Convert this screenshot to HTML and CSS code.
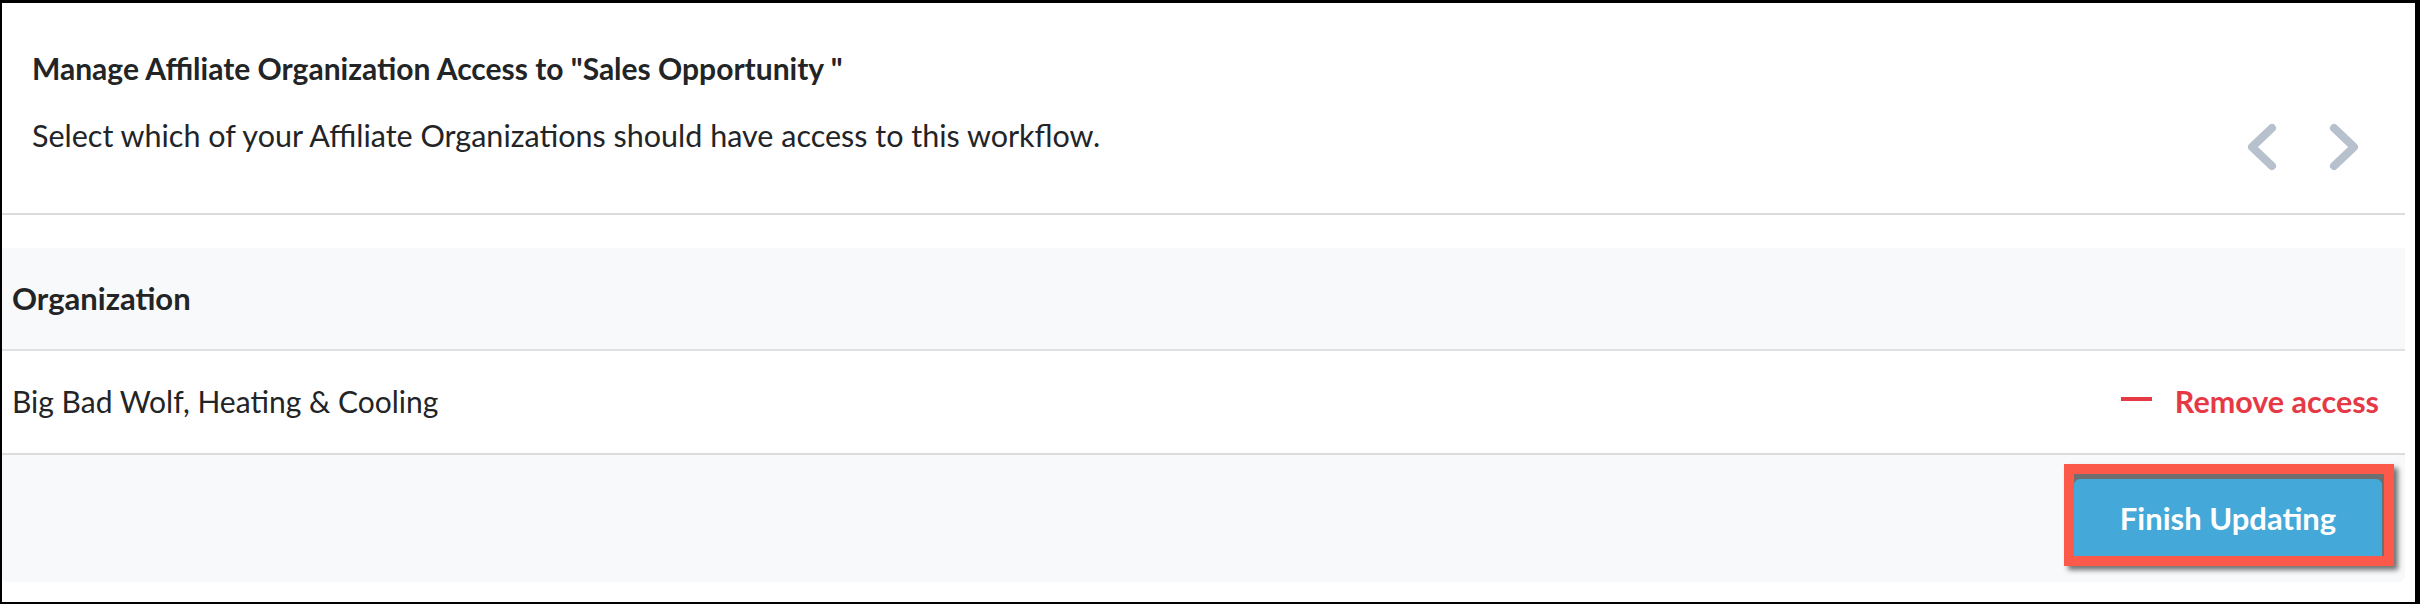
FILE: index.html
```html
<!DOCTYPE html>
<html lang="en">
<head>
<meta charset="utf-8">
<title>Manage Affiliate Organization Access</title>
<link rel="stylesheet" href="styles.css">
</head>
<body>
<div class="frame">
  <div class="card">
    <div class="card-head">
      <div class="head-text">
        <h1 class="title">Manage Affiliate Organization Access to "Sales Opportunity "</h1>
        <p class="subtitle">Select which of your Affiliate Organizations should have access to this workflow.</p>
      </div>
      <div class="pager">
        <svg class="chev" width="30" height="48" viewBox="0 0 30 48"><polyline points="25,5 5,24 25,43" fill="none" stroke="#b6c1cd" stroke-width="8" stroke-linecap="round" stroke-linejoin="round"/></svg>
        <svg class="chev" width="30" height="48" viewBox="0 0 30 48"><polyline points="5,5 25,24 5,43" fill="none" stroke="#b6c1cd" stroke-width="8" stroke-linecap="round" stroke-linejoin="round"/></svg>
      </div>
    </div>
    <div class="table">
      <div class="th">Organization</div>
      <div class="tr">
        <span class="org">Big Bad Wolf, Heating &amp; Cooling</span>
        <span class="remove"><span class="dash"></span>Remove access</span>
      </div>
    </div>
    <div class="card-foot">
      <div class="highlight">
        <button class="btn">Finish Updating</button>
      </div>
    </div>
  </div>
</div>
</body>
</html>
```

FILE: styles.css
```css
* { box-sizing: border-box; }
html, body { margin: 0; padding: 0; background: #fff; }
body {
  font-family: Lato, "Open Sans", "Liberation Sans", sans-serif;
  color: #222426;
}
.frame {
  width: 2420px;
  height: 604px;
  border-style: solid;
  border-color: #000;
  border-width: 3px 5px 2px 2px;
  padding: 0 10px 20px 0;
  display: flex;
  flex-direction: column;
}
.card {
  flex: 1;
  display: flex;
  flex-direction: column;
}
.card-head {
  display: flex;
  justify-content: space-between;
  align-items: flex-start;
  padding: 47px 46px 0 30px;
  height: 212px;
  border-bottom: 2px solid #dcdcdc;
}
.title {
  margin: 0;
  font-size: 30px;
  font-weight: 700;
  line-height: 36px;
}
.subtitle {
  margin: 31px 0 0;
  font-size: 30.5px;
  font-weight: 400;
  line-height: 36px;
}
.pager {
  display: flex;
  gap: 52px;
  margin-top: 73px;
}
.chev { display: block; }
.table {
  margin-top: 33px;
}
.th {
  background: #f8f9fa;
  padding: 32px 10px 33px;
  font-size: 31px;
  font-weight: 700;
  line-height: 36px;
  border-bottom: 2px solid #e0e1e2;
}
.tr {
  display: flex;
  justify-content: space-between;
  align-items: center;
  padding: 32px 26px 34px 10px;
  height: 104px;
  border-bottom: 2px solid #dcdcdc;
  font-size: 30px;
  line-height: 36px;
}
.remove {
  display: flex;
  align-items: center;
  gap: 23px;
  color: #e63946;
  font-weight: 700;
  font-size: 30.5px;
}
.dash {
  display: block;
  width: 31px;
  height: 4px;
  background: #e63946;
  margin-top: -4px;
}
.card-foot {
  flex: 1;
  background: #f8f9fa;
  border-radius: 0 0 6px 6px;
  display: flex;
  justify-content: flex-end;
  align-items: flex-start;
  padding: 9px 11px 0 0;
}
.highlight {
  border: 10px solid #fb5a4b;
  background: #6f6f6f;
  padding: 5px 2px 0 0;
  box-shadow: 4px 4px 5px rgba(0, 0, 0, 0.55);
}
.btn {
  display: block;
  width: 308px;
  height: 77px;
  border: none;
  border-radius: 6px 6px 0 0;
  background: #44a9d8;
  color: #fff;
  font-family: Lato, "Open Sans", "Liberation Sans", sans-serif;
  font-size: 31px;
  font-weight: 700;
  padding: 0;
}
```
